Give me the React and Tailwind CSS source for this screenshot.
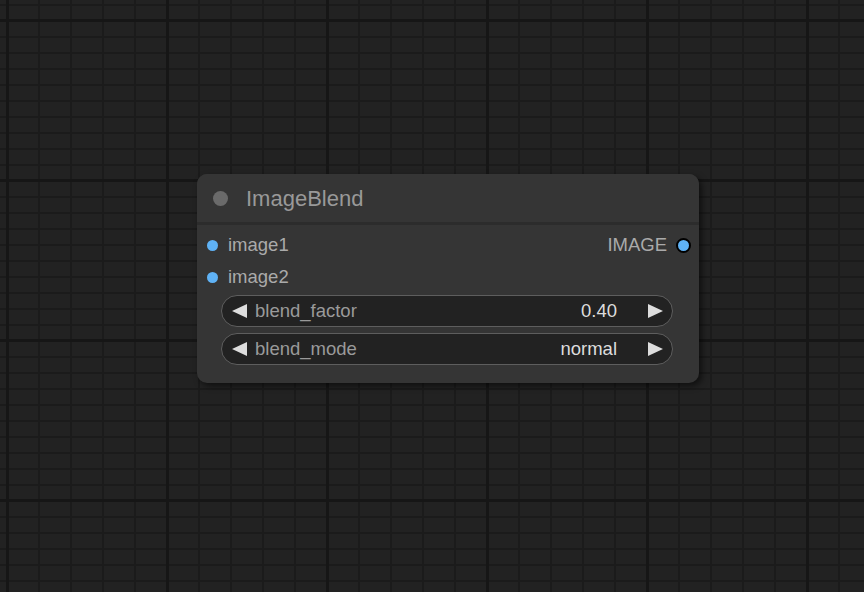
import React from 'react'

const font = { fontFamily: '"Liberation Sans", Arial, sans-serif' }

const Arrow = ({ dir }) => (
  <svg width="15" height="14" viewBox="0 0 15 14" className="shrink-0">
    {dir === 'left' ? (
      <polygon points="15,0 15,14 0,7" fill="#dddddd" />
    ) : (
      <polygon points="0,0 0,14 15,7" fill="#dddddd" />
    )}
  </svg>
)

const Widget = ({ label, value }) => (
  <div className="flex items-center h-8 w-[452px] ml-[24px] rounded-full bg-[#222222] border border-[#5e5e5e] pl-[10px] pr-[9px]">
    <Arrow dir="left" />
    <span className="ml-[8px] text-[18.5px] text-[#9a9a9a]">{label}</span>
    <span className="ml-auto text-[18.5px] text-[#dddddd]">{value}</span>
    <span className="ml-[31px]">
      <Arrow dir="right" />
    </span>
  </div>
)

const InputRow = ({ name, output }) => (
  <div className="flex items-center h-8">
    <div className="w-[11px] h-[11px] rounded-full bg-[#5fb2f5] ml-[10px]" />
    <span className="ml-[10px] text-[18.5px] text-[#aaaaaa]">{name}</span>
    {output && (
      <>
        <span className="ml-auto text-[18.5px] text-[#aaaaaa]">{output}</span>
        <div className="w-[15px] h-[15px] rounded-full bg-[#5fb2f5] border-2 border-black ml-[9px] mr-[8px]" />
      </>
    )}
  </div>
)

export default function App() {
  return (
    <div
      style={font}
      className="relative w-[864px] h-[592px] overflow-hidden bg-[#222222] bg-[image:linear-gradient(to_right,#161616_3px,transparent_3px),linear-gradient(to_bottom,#161616_3px,transparent_3px),linear-gradient(to_right,#1b1b1b_2px,transparent_2px),linear-gradient(to_bottom,#1b1b1b_2px,transparent_2px)] bg-[size:160px_160px,160px_160px,32px_16px,32px_16px] bg-[position:6px_19px,6px_19px,6px_4px,6px_4px]"
    >
      {/* node */}
      <div className="absolute left-[197px] top-[174px] w-[502px] rounded-[10px] bg-[#353535] shadow-[3px_3px_6px_rgba(0,0,0,0.55)]">
        <div className="flex items-center h-[51px] border-b-[3px] border-[#2c2c2c] rounded-t-[10px] bg-[#353535]">
          <div className="w-[15px] h-[15px] rounded-full bg-[#6a6a6a] ml-[16px]" />
          <span className="ml-[18px] text-[22px] text-[#999999]">ImageBlend</span>
        </div>
        <div className="pt-[4px] pb-[18px]">
          <InputRow name="image1" output="IMAGE" />
          <InputRow name="image2" />
          <div className="flex flex-col gap-[6px] mt-[2px]">
            <Widget label="blend_factor" value="0.40" />
            <Widget label="blend_mode" value="normal" />
          </div>
        </div>
      </div>
    </div>
  )
}
